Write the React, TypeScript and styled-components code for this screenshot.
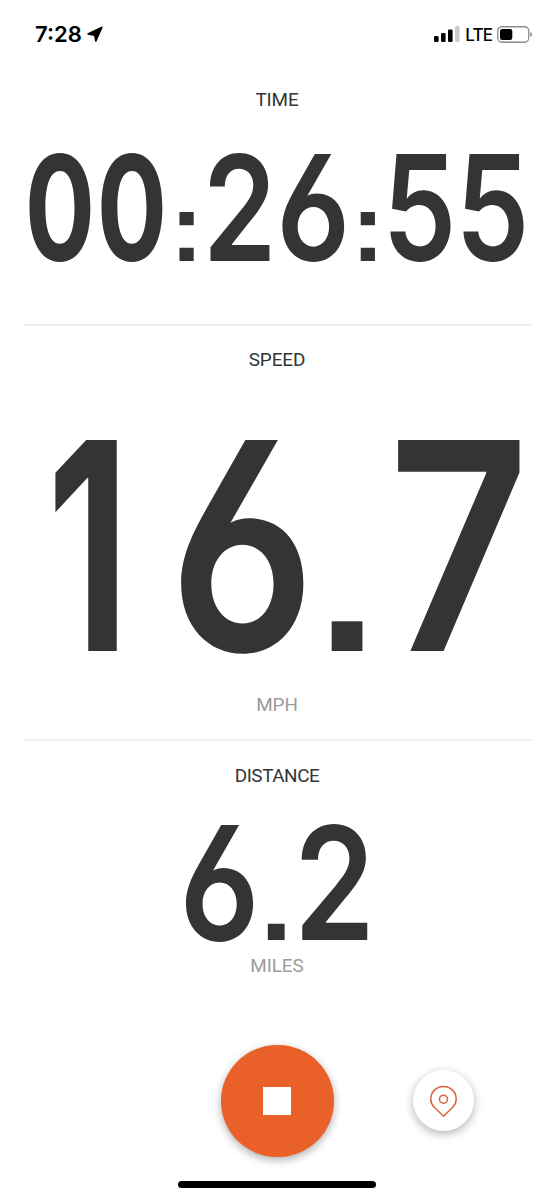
import React from "react";
import styled, { createGlobalStyle } from "styled-components";

const GlobalStyle = createGlobalStyle`
  *, *::before, *::after { box-sizing: border-box; }
  body { margin: 0; background: #fff; color: #343434; }
`;

const Screen = styled.main`
  display: flex;
  flex-direction: column;
  width: 554px;
  height: 1200px;
  overflow: hidden;
  background: #fff;
  font-family: Roboto, sans-serif;
`;

const StatusBar = styled.header`
  display: flex;
  align-items: center;
  justify-content: space-between;
  height: 68px;
  padding: 0 21px 0 35px;
  color: #000;
  font-family: Inter, sans-serif;
  font-weight: 500;
`;

const StatusGroup = styled.div<{ $gap: number }>`
  display: flex;
  align-items: center;
  gap: ${(p) => p.$gap}px;
`;

const Clock = styled.span`
  font-size: 22px;
  font-weight: 600;
  line-height: 24px;
`;

const Carrier = styled.span`
  font-size: 17px;
  line-height: 20px;
  letter-spacing: -0.9px;
  transform: translateY(0.5px);
`;

const Section = styled.section<{ $height: number; $top: number }>`
  display: flex;
  flex-direction: column;
  align-items: center;
  flex: none;
  height: ${(p) => p.$height}px;
  padding-top: ${(p) => p.$top}px;
`;

const Divider = styled.hr`
  flex: none;
  width: 508px;
  height: 2px;
  margin: 0 0 0 23px;
  border: 0;
  background: #efefef;
`;

const Label = styled.h2<{ $muted?: boolean; $tracking?: number }>`
  margin: 0;
  font-size: 18.9px;
  font-weight: 400;
  line-height: 24px;
  letter-spacing: ${(p) => p.$tracking ?? -0.1}px;
  color: ${(p) => (p.$muted ? "#9b9b9b" : "#343434")};
`;

const Readout = styled.div<{ $cap: number; $size: number; $top: number; $bottom?: number }>`
  display: flex;
  align-items: baseline;
  align-self: flex-start;
  flex: none;
  height: ${(p) => p.$cap}px;
  margin: ${(p) => p.$top}px 0 ${(p) => p.$bottom ?? 0}px;
  font-family: Inter, sans-serif;
  font-size: ${(p) => p.$size}px;
  font-weight: 600;
  line-height: ${(p) => p.$cap}px;
  font-feature-settings: "ss01", "cv03", "ss07";
`;

const Glyph = styled.span<{
  $width: number;
  $before: number;
  $squeeze: number;
  $size?: number;
  $nudge?: number;
  $weight?: number;
}>`
  display: flex;
  justify-content: center;
  flex: none;
  width: ${(p) => p.$width}px;
  margin-left: ${(p) => p.$before}px;
  ${(p) => (p.$size ? `font-size: ${p.$size}px;` : "")}
  ${(p) => (p.$weight ? `font-weight: ${p.$weight};` : "")}
  transform: translateX(${(p) => p.$nudge ?? 0}px) scaleX(${(p) => p.$squeeze});
`;

interface Digit {
  char: string;
  width: number;
  before: number;
  squeeze: number;
  size?: number;
  nudge?: number;
  weight?: number;
}

const time: Digit[] = [
  { char: "0", width: 60.5, before: 30, squeeze: 0.71, weight: 700, nudge: -0.3 },
  { char: "0", width: 60.5, before: 11.5, squeeze: 0.71, weight: 700, nudge: -0.3 },
  { char: ":", width: 15, before: 16.5, squeeze: 1.04, size: 94 },
  { char: "2", width: 61.5, before: 15, squeeze: 0.806 },
  { char: "6", width: 62.5, before: 12, squeeze: 0.835, nudge: -1 },
  { char: ":", width: 15.5, before: 14.5, squeeze: 1.04, size: 94 },
  { char: "5", width: 60.5, before: 16, squeeze: 0.8, nudge: -1.7 },
  { char: "5", width: 60.5, before: 12, squeeze: 0.8, nudge: -1.7 },
];

const speed: Digit[] = [
  { char: "1", width: 60, before: 55.5, squeeze: 0.66, weight: 700, nudge: 2 },
  { char: "6", width: 122.5, before: 65.5, squeeze: 0.838 },
  { char: ".", width: 30, before: 28.5, squeeze: 1, size: 212 },
  { char: "7", width: 120, before: 36, squeeze: 0.845, nudge: 0.8 },
];

const distance: Digit[] = [
  { char: "6", width: 67.5, before: 185.5, squeeze: 0.845, nudge: -0.3 },
  { char: ".", width: 16.5, before: 15, squeeze: 1, size: 116 },
  { char: "2", width: 66, before: 17, squeeze: 0.826, nudge: -0.7 },
];

const Digits = ({ items }: { items: Digit[] }) => (
  <>
    {items.map((d, i) => (
      <Glyph
        key={i}
        $width={d.width}
        $before={d.before}
        $squeeze={d.squeeze}
        $size={d.size}
        $nudge={d.nudge}
        $weight={d.weight}
      >
        {d.char}
      </Glyph>
    ))}
  </>
);

const Controls = styled.footer`
  display: grid;
  grid-template-columns: 221px 112.5px 79.5px 61px;
  align-items: center;
  flex: none;
  height: 112.5px;
  margin-top: 66.5px;
`;

const StopButton = styled.button`
  grid-column: 2;
  display: grid;
  place-items: center;
  width: 112.5px;
  height: 112.5px;
  padding: 0;
  border: 0;
  border-radius: 50%;
  background: #ea6029;
  box-shadow: 0 3px 8px rgba(0, 0, 0, 0.32);
`;

const StopMark = styled.span`
  width: 28px;
  height: 28.5px;
  background: #fff;
`;

const MapButton = styled.button`
  grid-column: 4;
  display: grid;
  place-items: center;
  width: 61px;
  height: 61px;
  padding: 0;
  border: 0;
  border-radius: 50%;
  background: #fff;
  box-shadow: 0 3px 10px rgba(0, 0, 0, 0.3);
`;

const HomeIndicator = styled.div`
  flex: none;
  align-self: center;
  width: 198px;
  height: 7.5px;
  margin-top: 23.5px;
  border-radius: 4px;
  background: #000;
`;

export default function App() {
  return (
    <Screen>
      <GlobalStyle />
      <StatusBar>
        <StatusGroup $gap={5}>
          <Clock>7:28</Clock>
          <svg width="16" height="17" viewBox="0 0 16 17" aria-hidden="true">
            <path d="M15 1.2 8.8 15.2 7.600 9.300 1 8z" fill="#000" stroke="#000" strokeWidth="1.4" strokeLinejoin="round" />
          </svg>
        </StatusGroup>
        <StatusGroup $gap={5}>
          <svg width="26" height="16" viewBox="0 0 26 16" aria-hidden="true">
            <rect x="0" y="10" width="4.6" height="6" rx="1.2" />
            <rect x="7" y="7" width="4.6" height="9" rx="1.2" />
            <rect x="14" y="3.5" width="4.6" height="12.5" rx="1.2" />
            <rect x="21" y="0" width="4.6" height="16" rx="1.2" fill="#ccc" />
          </svg>
          <Carrier>LTE</Carrier>
          <svg width="36" height="17" viewBox="0 0 36 17" aria-hidden="true">
            <rect x="0.75" y="0.75" width="31" height="15.5" rx="4.2" fill="none" stroke="#8c8c8c" strokeWidth="1.3" />
            <rect x="3" y="3" width="12.3" height="11" rx="2.2" />
            <path d="M33.3 6v5c1.1-.5 1.8-1.4 1.8-2.5s-.7-2-1.8-2.500z" fill="#8c8c8c" />
          </svg>
        </StatusGroup>
      </StatusBar>

      <Section $height={256} $top={20}>
        <Label>TIME</Label>
        <Readout $cap={107.5} $size={147} $top={42}>
          <Digits items={time} />
        </Readout>
      </Section>
      <Divider />
      <Section $height={413} $top={22.3}>
        <Label>SPEED</Label>
        <Readout $cap={211} $size={290} $top={67.7} $bottom={42.500}>
          <Digits items={speed} />
        </Readout>
        <Label $muted>MPH</Label>
      </Section>
      <Divider />
      <Section $height={237} $top={22.500}>
        <Label $tracking={-0.45}>DISTANCE</Label>
        <Readout $cap={115} $size={158} $top={37.5} $bottom={13.500}>
          <Digits items={distance} />
        </Readout>
        <Label $muted>MILES</Label>
      </Section>

      <Controls>
        <StopButton aria-label="Stop">
          <StopMark />
        </StopButton>
        <MapButton aria-label="Map">
          <svg width="28" height="32" viewBox="0 0 28 32" fill="none" stroke="#dc6238" strokeWidth="1.5" strokeLinejoin="round" aria-hidden="true">
            <path d="M13.500 31.200 4.300 22.200C1.800 19.700.8 17.500.8 14.200.8 7 6.300 1.400 13.500 1.400s12.700 5.600 12.700 12.800c0 3.300-1 5.500-3.500 8z" />
            <circle cx="13.500" cy="14.200" r="4" />
          </svg>
        </MapButton>
      </Controls>
      <HomeIndicator />
    </Screen>
  );
}
